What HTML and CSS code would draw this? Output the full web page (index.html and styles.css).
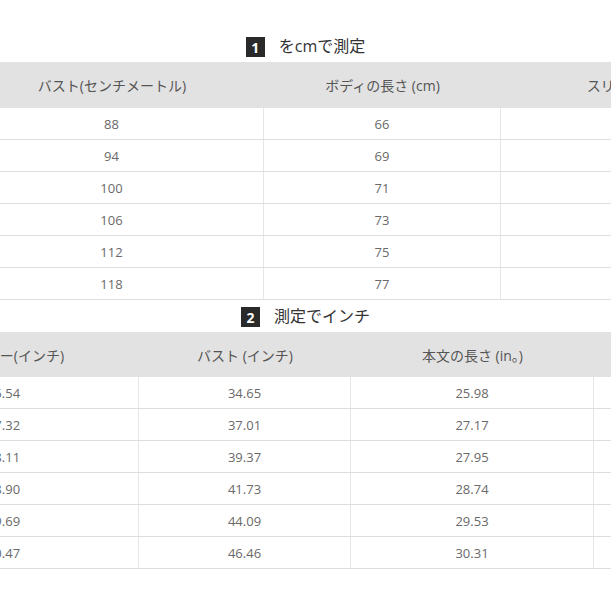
FILE: index.html
```html
<!DOCTYPE html>
<html lang="ja">
<head>
<meta charset="utf-8">
<title>サイズ表</title>
<link rel="stylesheet" href="styles.css">
</head>
<body>
<div class="page">
  <div class="title title-first"><span class="badge">1</span><span class="title-text">をcmで測定</span></div>
  <div class="table t1">
    <div class="row head">
      <div class="cell">バスト(センチメートル)</div>
      <div class="cell">ボディの長さ (cm)</div>
      <div class="cell">スリーブの長さ (cm)</div>
    </div>
    <div class="row"><div class="cell">88</div><div class="cell">66</div><div class="cell">19</div></div>
    <div class="row"><div class="cell">94</div><div class="cell">69</div><div class="cell">20</div></div>
    <div class="row"><div class="cell">100</div><div class="cell">71</div><div class="cell">21</div></div>
    <div class="row"><div class="cell">106</div><div class="cell">73</div><div class="cell">22</div></div>
    <div class="row"><div class="cell">112</div><div class="cell">75</div><div class="cell">23</div></div>
    <div class="row"><div class="cell">118</div><div class="cell">77</div><div class="cell">24</div></div>
  </div>
  <div class="title"><span class="badge">2</span><span class="title-text">測定でインチ</span></div>
  <div class="table t2">
    <div class="row head">
      <div class="cell">ショルダー(インチ)</div>
      <div class="cell">バスト (インチ)</div>
      <div class="cell">本文の長さ (in。)</div>
      <div class="cell">スリーブ (インチ)</div>
    </div>
    <div class="row"><div class="cell">36.54</div><div class="cell">34.65</div><div class="cell">25.98</div><div class="cell">7.48</div></div>
    <div class="row"><div class="cell">37.32</div><div class="cell">37.01</div><div class="cell">27.17</div><div class="cell">7.87</div></div>
    <div class="row"><div class="cell">38.11</div><div class="cell">39.37</div><div class="cell">27.95</div><div class="cell">8.27</div></div>
    <div class="row"><div class="cell">38.90</div><div class="cell">41.73</div><div class="cell">28.74</div><div class="cell">8.66</div></div>
    <div class="row"><div class="cell">39.69</div><div class="cell">44.09</div><div class="cell">29.53</div><div class="cell">9.06</div></div>
    <div class="row"><div class="cell">40.47</div><div class="cell">46.46</div><div class="cell">30.31</div><div class="cell">9.45</div></div>
  </div>
</div>
</body>
</html>
```
FILE: styles.css
```css
html, body {
  margin: 0;
  padding: 0;
  background: #ffffff;
}
body {
  width: 611px;
  height: 611px;
  overflow: hidden;
  font-family: "Open Sans", "Noto Sans CJK JP", sans-serif;
}
.page {
  width: 611px;
  overflow: hidden;
}
.title {
  height: 32px;
  display: flex;
  align-items: center;
  justify-content: center;
  gap: 14px;
  color: #333;
  font-size: 16px;
}
.title-first {
  margin-top: 30px;
}
.badge {
  width: 19px;
  height: 20px;
  background: #2a2a2a;
  color: #fff;
  font-weight: 700;
  font-size: 14px;
  display: flex;
  align-items: center;
  justify-content: center;
  margin-top: 2px;
}
.title-text {
  line-height: 1;
}
.table {
  display: flex;
  flex-direction: column;
}
.row {
  display: grid;
  height: 32px;
  box-sizing: border-box;
  border-bottom: 1px solid #dedede;
}
.t1 {
  margin-left: -40px;
}
.t1 .row {
  grid-template-columns: 304px 237px 300px;
  width: 841px;
}
.t2 {
  margin-left: -131px;
}
.t2 .row {
  grid-template-columns: 270px 212px 243px 250px;
  width: 975px;
}
.row.head {
  height: 46px;
  background: #e2e2e2;
  border-bottom: none;
}
.t2 .row.head {
  height: 45px;
}
.cell {
  display: flex;
  align-items: center;
  justify-content: center;
  font-size: 13px;
  color: #6a6a6a;
  white-space: nowrap;
  box-sizing: border-box;
  border-right: 1px solid #e6e6e6;
}
.head .cell {
  color: #555;
  font-size: 14px;
  border-right: none;
}
```
